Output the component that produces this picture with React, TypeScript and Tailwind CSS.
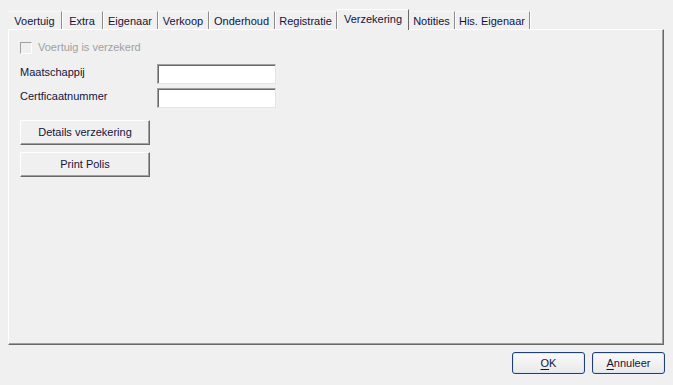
import React from 'react';

const tabs = [
  { label: 'Voertuig', w: 'w-[54px]' },
  { label: 'Extra', w: 'w-[41px]' },
  { label: 'Eigenaar', w: 'w-[55px]' },
  { label: 'Verkoop', w: 'w-[51px]' },
  { label: 'Onderhoud', w: 'w-[66px]' },
  { label: 'Registratie', w: 'w-[62px]' },
  { label: 'Verzekering', w: 'w-[72px]', active: true },
  { label: 'Notities', w: 'w-[46px]' },
  { label: 'His. Eigenaar', w: 'w-[75px]' },
];

function Tab({ label, w, active }: { label: string; w: string; active?: boolean }) {
  if (active) {
    return (
      <div
        className={`${w} relative z-10 -mb-px h-[21px] bg-[#f0f0f0] border-l border-t border-r border-l-white border-t-white border-r-[#696969] flex justify-center pt-[2px]`}
      >
        <span className="leading-[14px]">{label}</span>
      </div>
    );
  }
  return (
    <div
      className={`${w} h-[18px] border-t border-r border-t-[#f8f8f8] border-r-[#8c8c8c] shadow-[1px_0_0_#ffffff] flex justify-center pt-[2px]`}
    >
      <span className="leading-[14px]">{label}</span>
    </div>
  );
}

function ClassicButton({ children }: { children: React.ReactNode }) {
  return (
    <button className="w-[130px] h-[25px] bg-[#f0f0f0] border border-t-white border-l-white border-b-[#696969] border-r-[#696969] shadow-[inset_-1px_-1px_0_#a0a0a0] flex items-center justify-center text-[#14143c]">
      {children}
    </button>
  );
}

function TextField() {
  return (
    <div className="w-[119px] h-[20px] bg-white border border-t-[#a0a0a0] border-l-[#a0a0a0] border-b-[#e3e3e3] border-r-[#e3e3e3] shadow-[inset_1px_1px_0_#696969]" />
  );
}

function DialogButton({ hotkey, rest }: { hotkey: string; rest: string }) {
  return (
    <button className="w-[73px] h-[22px] rounded-[3px] border border-[#1e3f7a] bg-gradient-to-b from-[#fafafa] to-[#e9e9e9] shadow-[inset_0_0_0_1px_#d8e6f6] flex items-center justify-center text-[#14143c]">
      <span>
        <span className="underline underline-offset-2">{hotkey}</span>
        {rest}
      </span>
    </button>
  );
}

export default function App() {
  return (
    <div
      className="w-[673px] h-[385px] bg-[#f0f0f0] text-[11px] text-[#14143c] overflow-hidden px-[8px] pt-[8px]"
      style={{ fontFamily: '"Liberation Sans", Arial, sans-serif' }}
    >
      {/* Tab strip */}
      <div className="flex items-end h-[21px]">
        {tabs.map((t) => (
          <Tab key={t.label} label={t.label} w={t.w} active={t.active} />
        ))}
      </div>

      {/* Tab page */}
      <div className="w-[656px] h-[316px] border border-t-white border-l-white border-r-[#696969] border-b-[#696969] shadow-[inset_-1px_-1px_0_#a0a0a0] pl-[11px] pt-[11px]">
        <div className="flex items-center gap-[6px] h-[13px]">
          <div className="w-[12px] h-[12px] border border-t-[#a0a0a0] border-l-[#a0a0a0] border-b-white border-r-white bg-[#f0f0f0]" />
          <span className="text-[#a0a0a0]">Voertuig is verzekerd</span>
        </div>

        <div className="flex items-center mt-[10px] h-[20px]">
          <span className="w-[137px] -mt-[4px]">Maatschappij</span>
          <TextField />
        </div>
        <div className="flex items-center mt-[4px] h-[20px]">
          <span className="w-[137px] -mt-[4px]">Certficaatnummer</span>
          <TextField />
        </div>

        <div className="mt-[12px] flex flex-col gap-[7px]">
          <ClassicButton>Details verzekering</ClassicButton>
          <ClassicButton>Print Polis</ClassicButton>
        </div>
      </div>

      {/* Dialog buttons */}
      <div className="flex justify-end gap-[7px] mt-[7px] pr-[0px]">
        <DialogButton hotkey="O" rest="K" />
        <DialogButton hotkey="A" rest="nnuleer" />
      </div>
    </div>
  );
}
